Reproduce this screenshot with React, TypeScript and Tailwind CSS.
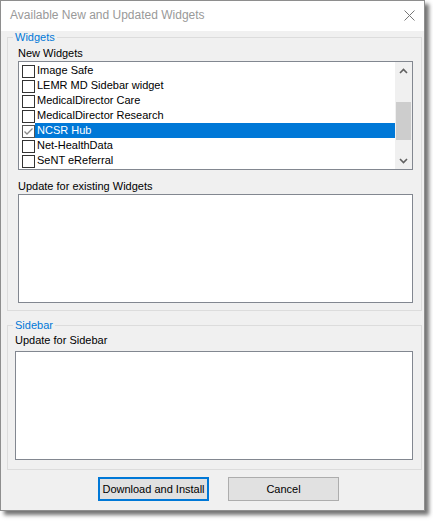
import React from "react";

const widgets = [
  { name: "Image Safe", checked: false },
  { name: "LEMR MD Sidebar widget", checked: false },
  { name: "MedicalDirector Care", checked: false },
  { name: "MedicalDirector Research", checked: false },
  { name: "NCSR Hub", checked: true, selected: true },
  { name: "Net-HealthData", checked: false },
  { name: "SeNT eReferral", checked: false },
];

function CheckBox({ checked }: { checked: boolean }) {
  return (
    <div
      className={`w-[13px] h-[13px] mt-[2px] bg-white border ${checked ? "border-[#555]" : "border-[#333]"}`}
    >
      {checked && (
        <svg width="11" height="11" viewBox="0 0 11 11">
          <polyline points="1.5,5.5 4,8 9.5,2.5" fill="none" stroke="#8a8a8a" strokeWidth="1.3" />
        </svg>
      )}
    </div>
  );
}

function ScrollBar() {
  return (
    <div className="w-[17px] h-full bg-[#f0f0f0] flex flex-col items-center">
      <div className="h-[17px] w-full flex items-center justify-center">
        <svg width="9" height="6" viewBox="0 0 9 6">
          <polyline points="1,5 4.5,1.5 8,5" fill="none" stroke="#606060" strokeWidth="1.6" />
        </svg>
      </div>
      <div className="h-[23px]" />
      <div className="w-[15px] h-[38px] bg-[#cdcdcd]" />
      <div className="flex-1" />
      <div className="h-[17px] w-full flex items-center justify-center">
        <svg width="9" height="6" viewBox="0 0 9 6">
          <polyline points="1,1 4.5,4.5 8,1" fill="none" stroke="#606060" strokeWidth="1.6" />
        </svg>
      </div>
    </div>
  );
}

export default function App() {
  return (
    <div
      className="w-[433px] h-[522px] bg-white text-[11px] leading-[13px] text-black"
      style={{ fontFamily: '"Liberation Sans", Arial, sans-serif' }}
    >
      <div className="w-[425px] h-[511px] border border-[#8e8e8e] bg-[#f0f0f0] shadow-[4px_4px_4px_rgba(0,0,0,0.55)] flex flex-col">
        {/* title bar */}
        <div className="h-[30px] bg-white flex items-center justify-between pl-[9px] pr-[9px]">
          <span className="text-[12px] text-[#999999] mt-[-2px]">Available New and Updated Widgets</span>
          <svg width="11" height="11" viewBox="0 0 11 11" className="mt-[-2px]">
            <line x1="0.5" y1="0.5" x2="10.5" y2="10.5" stroke="#777" strokeWidth="1" />
            <line x1="10.5" y1="0.5" x2="0.5" y2="10.5" stroke="#777" strokeWidth="1" />
          </svg>
        </div>

        <div className="flex flex-col pl-[6px] pr-[2px]">
          {/* Widgets group */}
          <fieldset className="w-[415px] border border-[#dcdcdc] pl-[10px] pb-[7px]">
            <legend className="ml-[-5px] px-[2px] leading-[13px] text-[#0078d7]">Widgets</legend>
            <div className="mt-[3px] h-[13px]">New Widgets</div>
            <div className="mt-[1px] w-[395px] h-[109px] border border-[#828790] bg-white flex">
              <div className="flex-1 pt-[1px]">
                {widgets.map((w) => (
                  <div key={w.name} className="flex h-[15px]">
                    <div className="w-[16px] pl-[3px]">
                      <CheckBox checked={w.checked} />
                    </div>
                    <div
                      className={`flex-1 pl-[2px] leading-[15px] whitespace-nowrap ${
                        w.selected ? "bg-[#0078d7] text-white" : ""
                      }`}
                    >
                      {w.name}
                    </div>
                  </div>
                ))}
              </div>
              <ScrollBar />
            </div>
            <div className="mt-[10px] h-[13px]">Update for existing Widgets</div>
            <div className="mt-[1px] w-[395px] h-[109px] border border-[#828790] bg-white" />
          </fieldset>

          {/* Sidebar group */}
          <fieldset className="mt-[8px] w-[415px] border border-[#dcdcdc] pl-[7px] pb-[9px]">
            <legend className="ml-[-2px] px-[2px] leading-[13px] text-[#0078d7]">Sidebar</legend>
            <div className="mt-[2px] h-[13px]">Update for Sidebar</div>
            <div className="mt-[4px] w-[398px] h-[109px] border border-[#828790] bg-white" />
          </fieldset>

          {/* buttons */}
          <div className="mt-[7px] flex pl-[91px] gap-[19px]">
            <button className="w-[111px] h-[24px] bg-[#e1e1e1] border-2 border-[#0078d7] flex items-center justify-center">
              Download and Install
            </button>
            <button className="w-[111px] h-[24px] bg-[#e1e1e1] border border-[#adadad] flex items-center justify-center">
              Cancel
            </button>
          </div>
        </div>
      </div>
    </div>
  );
}
